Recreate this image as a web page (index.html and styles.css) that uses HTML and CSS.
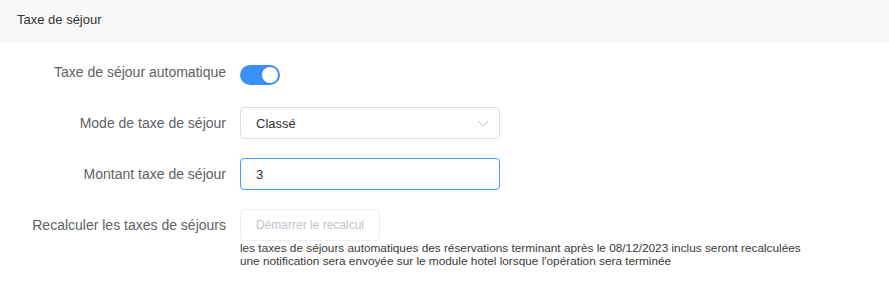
FILE: index.html
```html
<!DOCTYPE html>
<html lang="fr">
<head>
  <meta charset="UTF-8">
  <title>Taxe de séjour</title>
  <link rel="stylesheet" href="styles.css">
</head>
<body>
  <div class="panel">
    <div class="panel-header">Taxe de séjour</div>
    <form class="panel-body">
      <div class="form-row">
        <label class="form-label">Taxe de séjour automatique</label>
        <div class="form-control">
          <span class="switch is-on"><span class="switch-knob"></span></span>
        </div>
      </div>

      <div class="form-row">
        <label class="form-label">Mode de taxe de séjour</label>
        <div class="form-control">
          <div class="select">
            <span>Classé</span>
            <svg class="chevron" width="12" height="7" viewBox="0 0 12 7">
              <path d="M1 1 L6 6 L11 1" fill="none" stroke="#c0c4cc" stroke-width="1"/>
            </svg>
          </div>
        </div>
      </div>

      <div class="form-row">
        <label class="form-label">Montant taxe de séjour</label>
        <div class="form-control">
          <input class="input is-focus" type="text" value="3">
        </div>
      </div>

      <div class="form-row">
        <label class="form-label">Recalculer les taxes de séjours</label>
        <div class="form-control">
          <button type="button" class="btn" disabled>Démarrer le recalcul</button>
          <div class="help">
            <div>les taxes de séjours automatiques des réservations terminant après le 08/12/2023 inclus seront recalculées</div>
            <div>une notification sera envoyée sur le module hotel lorsque l'opération sera terminée</div>
          </div>
        </div>
      </div>
    </form>
  </div>
</body>
</html>
```

FILE: styles.css
```css
* {
  box-sizing: border-box;
}
body {
  margin: 0;
  font-family: 'Liberation Sans', Arial, sans-serif;
  background-color: #fff;
  color: #333;
}

.panel-header {
  height: 43px;
  padding: 12px 17px 0;
  background-color: #f8f8f8;
  font-size: 13px;
  color: #333;
}

.panel-body {
  padding-top: 13px;
}

.form-row {
  display: flex;
  align-items: flex-start;
  margin-bottom: 19px;
}

.form-label {
  width: 240px;
  padding-right: 14px;
  text-align: right;
  font-size: 14px;
  line-height: 32px;
  color: #606266;
}

.form-control {
  display: flex;
  flex-direction: column;
  align-items: flex-start;
  min-height: 32px;
  justify-content: center;
}

.switch {
  position: relative;
  display: inline-block;
  width: 40px;
  height: 20px;
  margin-top: 6px;
  border-radius: 10px;
  background-color: #dcdfe6;
}

.switch.is-on {
  background-color: #3c8ff7;
}

.switch-knob {
  position: absolute;
  top: 2px;
  left: 2px;
  width: 16px;
  height: 16px;
  border-radius: 50%;
  background-color: #fff;
}

.switch.is-on .switch-knob {
  left: 22px;
}

.select {
  display: flex;
  align-items: center;
  justify-content: space-between;
  width: 260px;
  height: 32px;
  padding: 0 10px 0 15px;
  border: 1px solid #dcdfe6;
  border-radius: 4px;
  font-size: 13px;
  color: #333;
}

.input {
  width: 260px;
  height: 32px;
  padding: 0 15px;
  border: 1px solid #dcdfe6;
  border-radius: 4px;
  font-family: inherit;
  font-size: 13px;
  color: #333;
  outline: none;
}

.input.is-focus {
  border-color: #409eff;
}

.btn {
  width: 140px;
  height: 32px;
  padding: 0;
  border: 1px solid #ebeef5;
  border-radius: 4px;
  background-color: #fff;
  font-family: inherit;
  font-size: 12px;
  color: #c0c4cc;
  cursor: not-allowed;
}

.help {
  margin-top: 1px;
  font-size: 11.8px;
  line-height: 12.5px;
  color: #3a3a3a;
}
```
